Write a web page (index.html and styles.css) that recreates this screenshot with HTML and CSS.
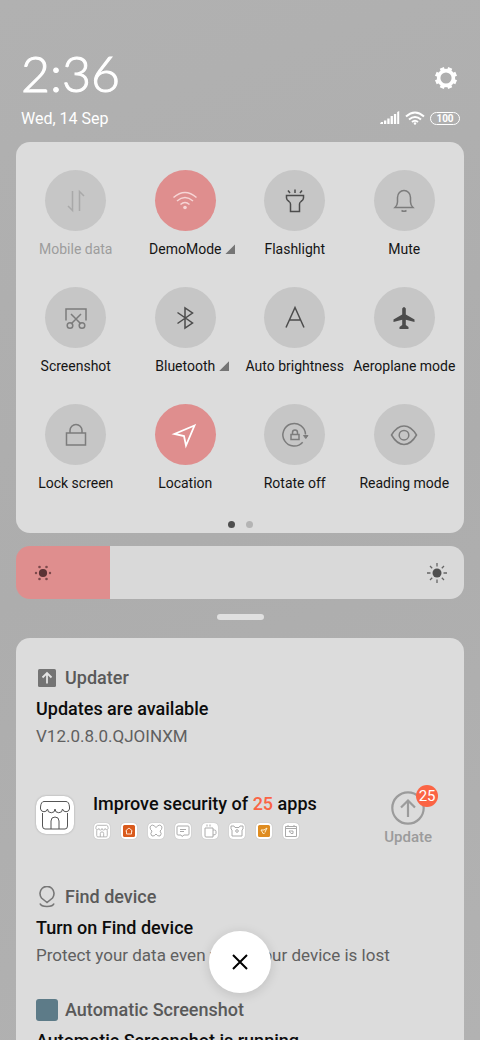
FILE: index.html
```html
<!DOCTYPE html>
<html lang="en">
<head>
<meta charset="utf-8">
<meta name="viewport" content="width=device-width, initial-scale=1">
<title>Notification shade</title>
<link rel="stylesheet" href="styles.css">
</head>
<body>
<svg class="defs" aria-hidden="true">
  <symbol id="store" viewBox="0 0 38 38"><path d="M4.500 11Q5 5.500 8 5.500H30Q33 5.500 33.500 11V13A3.600 3.600 0 0 1 26.500 13A3.700 3.700 0 0 1 19 13A3.700 3.700 0 0 1 11.500 13A3.600 3.600 0 0 1 4.500 13ZM6.500 17V30Q6.500 33 9 33H29Q31.500 33 31.500 30V17M15 33V25A4 4 0 0 1 23 25V33"/></symbol>
</svg>
<header class="header">
  <div class="header-row">
    <time class="clock">2:36</time>
    <button class="settings" aria-label="Settings">
      <svg width="24" height="24" viewBox="0 0 24 24" fill="none" stroke="#fff"><circle cx="12" cy="12" r="7.400" stroke-width="3.600"/><g stroke-width="4.400" transform="rotate(22.500 12 12)"><path d="M12 1V4M12 20V23M1 12H4M20 12H23"/><path d="M12 1V4M12 20V23M1 12H4M20 12H23" transform="rotate(45 12 12)"/></g></svg>
    </button>
  </div>
  <div class="status-row">
    <span class="date">Wed, 14 Sep</span>
    <div class="status">
      <svg width="20" height="14" viewBox="0 0 20 14" fill="#fff"><path d="M1 11h2v2H0zM4 9.500h2.300v3.500H4zM7.300 7.500h2.300v5.500H7.300zM10.600 5h2.300v8h-2.300zM13.900 3h2.300v10h-2.300zM17.200 1l2-1v13h-2z"/></svg>
      <svg width="20" height="14" viewBox="0 0 20 14" fill="none" stroke="#fff" stroke-width="2"><path d="M1 5.500Q10-2.500 19 5.500M4 8.500Q10 3.500 16 8.500M7 11Q10 8.500 13 11"/><circle cx="10" cy="12.500" r="1.200" fill="#fff" stroke="none"/></svg>
      <span class="battery">100</span>
    </div>
  </div>
</header>
<main>
  <section class="card toggles" aria-label="Quick settings">
    <div class="grid">
      <button class="tile disabled"><span class="disc"><svg width="30" height="30" viewBox="0 0 30 30"><path d="M11.500 5V24.500L7 20M18.500 25V5.500L23 10"/></svg></span><span class="label">Mobile data</span></button>
      <button class="tile on soft"><span class="disc"><svg width="30" height="30" viewBox="0 0 30 30"><path d="M3.500 11.500Q15 1.500 26.500 11.500M7 15Q15 8 23 15M10.500 18.500Q15 14.500 19.500 18.500"/><circle cx="15" cy="21.500" r="1.800" fill="currentColor" stroke="none"/></svg></span><span class="label">DemoMode<i class="corner"></i></span></button>
      <button class="tile dark"><span class="disc"><svg width="30" height="30" viewBox="0 0 30 30"><path d="M6.500 9.500H23.500V12Q23.500 14 21 15.500Q19.500 16.500 19.500 18V25.500H10.500V18Q10.500 16.500 9 15.500Q6.500 14 6.500 12ZM15 3.500V7M8 4.500L10 7M22 4.500L20 7"/></svg></span><span class="label">Flashlight</span></button>
      <button class="tile"><span class="disc"><svg width="30" height="30" viewBox="0 0 30 30"><path d="M6 21.500Q8.500 19 8.500 16V11.500A6.500 7 0 0 1 21.500 11.500V16Q21.500 19 24 21.500ZM12.500 24.500Q15 26 17.500 24.500"/></svg></span><span class="label">Mute</span></button>
      <button class="tile"><span class="disc"><svg width="30" height="30" viewBox="0 0 30 30"><path d="M5 17.500V6H25V17.500M10 11L20 21M20 11L10 21"/><circle cx="9" cy="22.500" r="2.800"/><circle cx="21" cy="22.500" r="2.800"/></svg></span><span class="label">Screenshot</span></button>
      <button class="tile dark"><span class="disc"><svg width="30" height="30" viewBox="0 0 30 30"><path d="M7.500 9.500L22.500 20L15 25V5L22.500 10L7.500 20.500"/></svg></span><span class="label">Bluetooth<i class="corner"></i></span></button>
      <button class="tile dark"><span class="disc"><svg width="30" height="30" viewBox="0 0 30 30"><path d="M6 24.500L15 4.500L24 24.500M9.500 17H20.500"/></svg></span><span class="label">Auto brightness</span></button>
      <button class="tile dark"><span class="disc"><svg width="30" height="30" viewBox="0 0 30 30"><path d="M13.200 5.500Q15 2.500 16.800 5.500V11.500L25.500 16.500V19L16.800 16.800V22L19.500 24V26H10.500V24L13.200 22V16.800L4.500 19V16.500L13.200 11.500Z" fill="currentColor" stroke="none"/></svg></span><span class="label">Aeroplane mode</span></button>
      <button class="tile"><span class="disc"><svg width="30" height="30" viewBox="0 0 30 30"><path d="M5.500 13H24.500V25H5.500ZM9 13V10.500A6 6 0 0 1 21 10.500V13"/></svg></span><span class="label">Lock screen</span></button>
      <button class="tile on"><span class="disc"><svg width="30" height="30" viewBox="0 0 30 30"><path d="M24.500 5.500L4.500 14L14 16L16 25.500Z" stroke-width="1.800"/></svg></span><span class="label">Location</span></button>
      <button class="tile"><span class="disc"><svg width="30" height="30" viewBox="0 0 30 30"><path d="M25.500 14.500A11.300 11.300 0 1 0 22.700 22.200M11 14.500H19V19.500H11ZM12.500 14.500V12.500A2.500 2.500 0 0 1 17.500 12.500V14.500"/><path d="M23.500 15.500H28L25.800 18.500Z" fill="currentColor" stroke-width="1"/></svg></span><span class="label">Rotate off</span></button>
      <button class="tile"><span class="disc"><svg width="30" height="30" viewBox="0 0 30 30"><path d="M2.500 15Q8 6 15 6Q22 6 27.500 15Q22 24.500 15 24.500Q8 24.500 2.500 15Z"/><circle cx="15" cy="15.200" r="4.800"/></svg></span><span class="label">Reading mode</span></button>
    </div>
    <div class="pager"><i class="dot current"></i><i class="dot"></i></div>
  </section>

  <div class="brightness">
    <input class="range" type="range" min="0" max="100" value="21" aria-label="Brightness">
    <svg class="sun low" width="18" height="18" viewBox="0 0 18 18"><g fill="#5b3335"><circle cx="9" cy="9" r="4.100"/><g opacity=".75"><circle cx="2" cy="9" r="1.200"/><circle cx="16" cy="9" r="1.200"/><circle cx="5.500" cy="3" r="1.300"/><circle cx="12.500" cy="3" r="1.300"/><circle cx="5.500" cy="15" r="1.300"/><circle cx="12.500" cy="15" r="1.300"/></g></g></svg>
    <svg class="sun high" width="22" height="22" viewBox="0 0 22 22"><circle cx="11" cy="11" r="4.500" fill="#505050"/><path d="M11 1V4.500M11 17.500V21M1 11H4.500M17.500 11H21M4 4L6.200 6.200M15.800 15.800L18 18M18 4L15.800 6.200M6.200 15.800L4 18" stroke="#666" stroke-width="1.300"/></svg>
  </div>
  <div class="handle"></div>

  <section class="card notifications" aria-label="Notifications">
    <article class="note">
      <div class="app"><svg width="22" height="22" viewBox="0 0 22 22"><rect x="2" y="2" width="18" height="18" rx="1.500" fill="#747474"/><path d="M11 16.500V6M6.500 10.500L11 6L15.500 10.500" fill="none" stroke="#e4e4e4" stroke-width="1.800"/></svg>Updater</div>
      <h2 class="title">Updates are available</h2>
      <p class="body">V12.0.8.0.QJOINXM</p>
    </article>
    <article class="security">
      <svg class="store" width="38" height="38"><use href="#store"/></svg>
      <div class="security-text">
        <h2 class="title">Improve security of <span class="accent">25</span> apps</h2>
        <div class="apps">
          <svg class="mini shop" viewBox="0 0 38 38"><use href="#store"/></svg>
          <svg class="mini" viewBox="0 0 16 16"><rect x="2" y="2" width="12" height="12" rx="1.500" fill="#d95a1c" stroke="none"/><path d="M4.500 8L8 5L11.500 8M5.500 7.500V11H10.500V7.500" stroke="#ffe0cc"/></svg>
          <svg class="mini" viewBox="0 0 16 16"><path d="M8 4.500Q4 0 2 4Q2 7 4 8Q1.500 11 4 13Q6.500 13.500 8 11Q9.500 13.500 12 13Q14.500 11 12 8Q14 7 14 4Q12 0 8 4.500Z"/></svg>
          <svg class="mini" viewBox="0 0 16 16"><path d="M3 3H13Q14 3 14 4V11Q14 12 13 12H9L7 13.500L6 12H3Q2 12 2 11V4Q2 3 3 3ZM5 6.500H11M5 8.500H9"/></svg>
          <svg class="mini" viewBox="0 0 16 16"><path d="M3 5H11V14H4Q3 14 3 13ZM11 7H12.500Q14 7 14 8.500V10.500Q14 12 11 12M5 1.500V3.500M8 1.500V3.500"/></svg>
          <svg class="mini" viewBox="0 0 16 16"><path d="M2 3H5L6 4.500H10L11 3H14V6L13 7V13H3V7L2 6Z"/><circle cx="8" cy="8" r="1.300"/></svg>
          <svg class="mini" viewBox="0 0 16 16"><rect x="2" y="2" width="12" height="12" rx="1.500" fill="#df8c20" stroke="none"/><path d="M5 7L7.500 11L9 9.500M5 7H8L11 5L9 9" stroke="#fff0d0"/></svg>
          <svg class="mini" viewBox="0 0 16 16"><path d="M2.500 3.500H13.500V13.500H2.500ZM2.500 5.500H13.500M5 2V4M11 2V4M6 8H10V10.500H8L6 8"/></svg>
        </div>
      </div>
      <button class="update">
        <span class="ring"><svg width="34" height="34" viewBox="0 0 34 34" fill="none" stroke="#9b9b9b" stroke-width="2.200"><circle cx="17" cy="17" r="15.700"/><path d="M17 26V9.500M10 16.500L17 9.500L24 16.500"/></svg><span class="badge">25</span></span>
        Update
      </button>
    </article>
    <article class="note">
      <div class="app"><svg width="22" height="22" viewBox="0 0 22 22" fill="none" stroke="#777" stroke-width="1.600"><path d="M11 16.500L5.500 12A7 7.200 0 1 1 16.500 12ZM4 17.500Q5 20.500 11 20.500Q17 20.500 18 17.500"/></svg>Find device</div>
      <h2 class="title">Turn on Find device</h2>
      <p class="body">Protect your data even when your device is lost</p>
    </article>
    <article class="note">
      <div class="app"><span class="swatch"></span>Automatic Screenshot</div>
      <h2 class="title">Automatic Screenshot is running</h2>
    </article>
  </section>
</main>
<button class="clear" aria-label="Clear all notifications"><svg width="18" height="18" viewBox="0 0 18 18"><path d="M2 2L16 16M16 2L2 16" stroke="#000" stroke-width="2"/></svg></button>
</body>
</html>
```
FILE: styles.css
```css
* { box-sizing: border-box; }

body {
  margin: 0;
  height: 100vh;
  overflow: hidden;
  padding: 0 16px;
  background: linear-gradient(160deg, #b1b1b1, #adadad 50%, #b2b2b2);
  color: #151515;
  font-family: Roboto, "Noto Sans", sans-serif;
  font-size: 14px;
}

button {
  padding: 0;
  border: 0;
  background: none;
  color: inherit;
  font: inherit;
}

svg { display: block; flex: none; }
h2, p { margin: 0; }
.defs { display: none; }

.header {
  padding: 40px 4px 12px 5px;
  color: #fff;
}
.header-row, .status-row {
  display: flex;
  align-items: center;
  justify-content: space-between;
}
.clock {
  font-family: Lato, sans-serif;
  font-size: 50px;
  font-weight: 300;
  line-height: 66px;
  -webkit-text-stroke: 1px #fff;
}
.settings { margin: 10px 2px 0 0; }
.status-row { height: 24px; }
.date { font-size: 16px; }
.status { display: flex; align-items: center; gap: 5px; }
.battery {
  width: 30px;
  border: 1px solid #fff;
  border-radius: 7px;
  font-size: 10px;
  font-weight: 700;
  line-height: 11px;
  text-align: center;
}

.card {
  background: #dcdcdc;
  border-radius: 14px;
}

.toggles { padding: 28px 5px 5px; }
.grid {
  display: grid;
  grid-template-columns: repeat(4, 1fr);
  row-gap: 28px;
}
.tile {
  display: flex;
  flex-direction: column;
  align-items: center;
  gap: 8px;
}
.disc {
  display: grid;
  place-items: center;
  width: 61px;
  height: 61px;
  border-radius: 50%;
  background: #c6c6c6;
  color: #7c7c7c;
}
.disc svg {
  fill: none;
  stroke: currentColor;
  stroke-width: 1.5px;
}
.dark .disc { color: #4c4c4c; }
.on .disc { background: #df8e8e; color: #fff; }
.soft .disc { color: #f6d5d5; }
.disabled .disc { color: #a9a9a9; }
.disabled .label { color: #9d9d9d; }
.label {
  position: relative;
  line-height: 20px;
  white-space: nowrap;
}
.corner {
  position: absolute;
  left: 100%;
  bottom: 5px;
  width: 10px;
  height: 10px;
  margin-left: 4px;
  background: #757575;
  clip-path: polygon(100% 0, 100% 100%, 0 100%);
}
.pager {
  display: flex;
  justify-content: center;
  gap: 11px;
  padding-top: 28px;
}
.dot {
  width: 7px;
  height: 7px;
  border-radius: 50%;
  background: #b4b4b4;
}
.dot.current { background: #4e4e4e; }

.brightness {
  position: relative;
  margin-top: 13px;
}
.range {
  display: block;
  appearance: none;
  width: 100%;
  height: 53px;
  margin: 0;
  border-radius: 14px;
  background: linear-gradient(to right, #df8e8e 21%, #d9d9d9 21%);
}
.range::-webkit-slider-thumb {
  appearance: none;
  width: 1px;
  height: 53px;
}
.sun { position: absolute; top: 50%; transform: translateY(-50%); pointer-events: none; }
.low { left: 18px; }
.high { right: 16px; }

.handle {
  width: 47px;
  height: 6px;
  margin: 15px auto 18px;
  border-radius: 3px;
  background: #e0e0e0;
}

.notifications { padding: 28px 20px; }
.app {
  display: flex;
  align-items: center;
  gap: 7px;
  margin-bottom: 4px;
  color: #595959;
  font-size: 18px;
  font-weight: 500;
  line-height: 24px;
}
.title {
  font-size: 18px;
  font-weight: 500;
  line-height: 30px;
  color: #0c0c0c;
}
.body {
  color: #606060;
  font-size: 17px;
  line-height: 24px;
}
.note + .note { margin-top: 31px; }
.swatch {
  width: 22px;
  height: 22px;
  border-radius: 3px;
  background: #5d7b88;
}

.security {
  display: flex;
  align-items: flex-start;
  margin: 42px 0 38px;
}
.store, .mini {
  background: #fff;
  fill: none;
}
.store {
  margin-top: 6px;
  border-radius: 10px;
  stroke: #555;
  stroke-width: 1px;
  box-shadow: 0 0 2px #999;
}
.security-text { flex: 1; padding-left: 19px; }
.security .title { line-height: 28px; }
.apps { display: flex; gap: 11px; margin-top: 5px; padding-left: 1px; }
.mini {
  width: 16px;
  height: 16px;
  border-radius: 4px;
  stroke: #aaa;
  stroke-width: 1px;
  box-shadow: 0 0 1px #999;
}
.shop { stroke-width: 2px; }
.accent { color: #fa6445; }
.update {
  display: flex;
  flex-direction: column;
  align-items: center;
  gap: 2px;
  margin: 1px 12px 0 0;
  color: #9b9b9b;
  font-size: 15px;
  font-weight: 500;
  line-height: 20px;
}
.ring { position: relative; }
.badge {
  position: absolute;
  top: -6px;
  right: -13px;
  width: 22px;
  border-radius: 50%;
  background: #fb6444;
  color: #fff;
  font-weight: 400;
  line-height: 22px;
}

.clear {
  position: fixed;
  bottom: 47px;
  left: calc(50% - 31px);
  display: grid;
  place-items: center;
  width: 62px;
  height: 62px;
  border-radius: 50%;
  background: #fff;
  box-shadow: 0 2px 12px #0002;
}
```
